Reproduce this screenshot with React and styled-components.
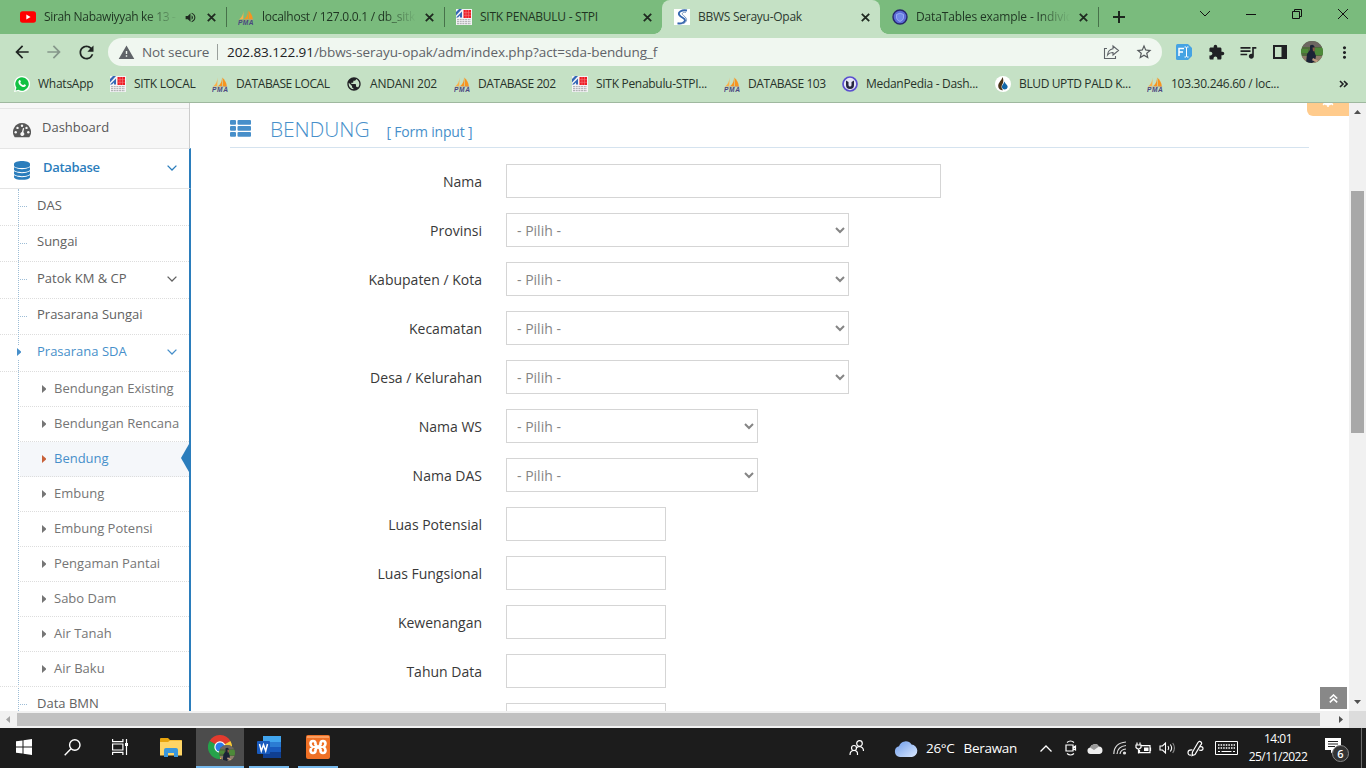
import React from 'react';
import styled, { createGlobalStyle, css } from 'styled-components';
import {
  MdArrowBack,
  MdArrowForward,
  MdExtension,
  MdMoreVert,
  MdPublic,
  MdQueueMusic,
  MdRefresh,
  MdStarBorder,
  MdVolumeUp,
  MdWarning,
} from 'react-icons/md';

const GlobalStyle = createGlobalStyle`
  * {
    box-sizing: border-box;
  }

  body {
    margin: 0;
    overflow: hidden;
    font-family: 'Open Sans', 'Noto Sans', sans-serif;
  }

  svg {
    display: block;
    flex: none;
  }
`;

/// FAVICONS

const YoutubeIcon = () => (
  <svg width="16" height="16" viewBox="0 0 16 16">
    <rect x="0" y="2.3" width="16" height="11.4" rx="2.6" fill="#f00" />
    <path d="M6.3 5.5 10.6 8 6.3 10.5z" fill="#fff" />
  </svg>
);

const PmaIcon = () => (
  <svg width="16" height="16" viewBox="0 0 16 16">
    <path d="M5.6 1.5C5.4 5 4 8.6 1 10.6L5.3 10z" fill="#f9b04a" />
    <path d="M9.8.5C10.4 4 9.2 8 6 10.3L10.4 10z" fill="#f79420" />
    <path d="M10.3 1.5C12.6 3.5 14.7 7 14.8 10.3L11 10z" fill="#f79420" />
    <path d="M.5 11 15.5 10 14.5 11 1.500 11.500z" fill="#c49a70" />
    <text x="0" y="16" fontFamily="Liberation Sans" fontSize="6.6" fontWeight="700" fontStyle="italic" textLength="15.5" fill="#4a4680">PMA</text>
  </svg>
);

const SitkIcon = () => (
  <svg width="16" height="16" viewBox="0 0 16 16">
    <rect width="16" height="16" fill="#f3f3f5" />
    <path d="M0 3 3 0H6L0 6.500zM0 8.500 6 2.500V8.500H4V6.500L2 8.500z" fill="#3467b5" />
    <rect x="7.5" y="1" width="7.5" height="8" fill="#ee1c25" />
    <path d="M10 1v8M12.5 1v8M7.5 3.7h7.500M7.5 6.300h7.500" stroke="#f47a7f" strokeWidth=".6" />
    <path d="M1 10.700h14M1 12.700h14M1 14.700h14" stroke="#a5a5a8" strokeWidth="1" strokeDasharray="2 .7" />
  </svg>
);

const SerayuIcon = () => (
  <svg width="16" height="16" viewBox="0 0 16 16">
    <rect width="16" height="16" fill="#fff" />
    <path d="M13 1.500C8 .5 3.500 3 5.300 6S11.500 9 11 11.500 7 15 3.500 14.200" fill="none" stroke="#3567b0" strokeWidth="1.900" />
    <path d="M12 3.300C7.800 3 7.500 5 9.500 6.500S13.300 10 12.300 12 9.500 14.300 8 14.700" fill="none" stroke="#6d8db8" strokeWidth=".9" />
  </svg>
);

const DataTablesIcon = () => (
  <svg width="16" height="16" viewBox="0 0 16 16">
    <circle cx="8" cy="8" r="7" fill="#5b6bd6" stroke="#26266b" strokeWidth="1.4" />
    <path d="M4.500 5.500Q8 2.800 11.500 5.500V9Q11 11.500 8 12.500 5 11.500 4.500 9z" fill="#7389e8" stroke="#a3b2f5" strokeWidth=".8" />
  </svg>
);

const MedanIcon = () => (
  <svg width="16" height="16" viewBox="0 0 16 16">
    <circle cx="8" cy="8" r="7" fill="#e6e6f5" stroke="#5a4fcf" strokeWidth="1.7" />
    <path d="M4 4.500V9a4 4 0 0 0 8 0V4.500L9.500 6v3a1.500 1.500 0 0 1-3 0V6z" fill="#26263f" />
  </svg>
);

const DropIcon = () => (
  <svg width="16" height="16" viewBox="0 0 16 16">
    <circle cx="8" cy="8" r="8" fill="#fff" />
    <path d="M7.500 1C7 4 3.200 6.500 3.200 10A4.300 4.300 0 0 0 8 14.300C6 12 6 10 8 7 8.500 5 8.500 3 7.500 1z" fill="#4a3418" />
    <path d="M9.300 5.500C8.800 8 6.700 9 6.900 11.400A3 3 0 0 0 12.700 11C12.800 9 10.500 8 9.300 5.500z" fill="#1266a8" />
  </svg>
);

const WhatsappIcon = () => (
  <svg width="16" height="16" viewBox="0 0 16 16">
    <path d="M8 0a8 8 0 1 1-3.800 15L0 16l1.100-4A8 8 0 0 1 8 0z" fill="#fff" />
    <path d="M8 1.200A6.800 6.800 0 1 1 4.400 13.800L1.600 14.400l.8-2.700A6.800 6.800 0 0 1 8 1.200z" fill="#12c143" />
    <path d="M5.200 4.200c.6-.5 1-.3 1.200.2l.5 1.100c0 .5-.6.8-.6 1.200.7 1.300 1.600 2 2.900 2.500.5-.1.700-.9 1.200-.9l1.500.8c.2.900-.8 2-1.900 2C7.300 11 4.500 8.200 4.400 5.900c0-.7.300-1.300.8-1.700z" fill="#fff" />
  </svg>
);

const Avatar = ({ size = 22 }) => (
  <svg width={size} height={size} viewBox="0 0 22 22">
    <clipPath id="face"><circle cx="11" cy="11" r="11" /></clipPath>
    <g clipPath="url(#face)">
      <rect width="22" height="22" fill="#4f6b3c" />
      <path d="M0 0h22v6H0z" fill="#6d6661" />
      <path d="M14 7h8v7h-8zM0 8h7v4H0z" fill="#4d8a39" />
      <path d="M0 15h22v7H0z" fill="#8f7c6a" />
      <path d="M9 4.500Q12 2.500 13.500 5.500L13 10l2 5-1 5-3 2H5l1-9 3-4z" fill="#1b2336" />
      <path d="M11.500 6.500h2.200l.2 3-1.900 1z" fill="#8a5c45" />
      <path d="M12 17l5 2.500-1 1.800-5-2z" fill="#c09a80" />
    </g>
  </svg>
);

/// BROWSER DATA

const tabs = [
  { title: 'Sirah Nabawiyyah ke 13 -', icon: <YoutubeIcon />, audio: true, titleWidth: 134, spacing: -0.34, fade: true },
  { title: 'localhost / 127.0.0.1 / db_sitk', icon: <PmaIcon />, titleWidth: 154, spacing: -0.27, fade: true },
  { title: 'SITK PENABULU - STPI', icon: <SitkIcon />, titleWidth: 154, spacing: -0.25 },
  { title: 'BBWS Serayu-Opak', icon: <SerayuIcon />, titleWidth: 154, active: true, spacing: -0.26 },
  { title: 'DataTables example - Individ', icon: <DataTablesIcon />, titleWidth: 154, spacing: -0.14, fade: true },
];

const bookmarks = [
  { label: 'WhatsApp', icon: <WhatsappIcon />, width: 96, spacing: -0.25 },
  { label: 'SITK LOCAL', icon: <SitkIcon />, width: 102, spacing: -0.25 },
  { label: 'DATABASE LOCAL', icon: <PmaIcon />, width: 134, spacing: -0.4 },
  { label: 'ANDANI 202', icon: <MdPublic size={16} color="#202124" />, width: 108, spacing: -0.2 },
  { label: 'DATABASE 202', icon: <PmaIcon />, width: 118, spacing: -0.42 },
  { label: 'SITK Penabulu-STPI...', icon: <SitkIcon />, width: 152, spacing: -0.3 },
  { label: 'DATABASE 103', icon: <PmaIcon />, width: 118, spacing: -0.42 },
  { label: 'MedanPedia - Dash...', icon: <MedanIcon />, width: 153, spacing: -0.3 },
  { label: 'BLUD UPTD PALD K...', icon: <DropIcon />, width: 152, spacing: -0.37 },
  { label: '103.30.246.60 / loc...', icon: <PmaIcon />, width: 140, spacing: -0.28 },
];

const Cross = () => (
  <svg width="9" height="9" viewBox="0 0 9 9">
    <path d="M.8.8 8.2 8.2M8.2.8.8 8.2" stroke="#1f2a20" strokeWidth="1.8" />
  </svg>
);

const Browser = () => (
  <>
    <TabStrip>
      {tabs.map((tab) => (
        <Tab key={tab.title} $active={tab.active}>
          {tab.icon}
          <TabTitle $width={tab.titleWidth} $spacing={tab.spacing} $active={tab.active} $fade={tab.fade}>{tab.title}</TabTitle>
          {tab.audio && <AudioIcon size={13} />}
          <TabClose><Cross /></TabClose>
        </Tab>
      ))}
      <NewTab>
        <svg width="12" height="12" viewBox="0 0 12 12"><path d="M6 0v12M0 6h12" stroke="#1d271e" strokeWidth="2" /></svg>
      </NewTab>
      <WindowButtons>
        <svg width="12" height="12" viewBox="0 0 12 12"><path d="M1 3l5 5 5-5" fill="none" stroke="#111" /></svg>
        <svg width="12" height="12" viewBox="0 0 12 12"><path d="M1 6.500h10" stroke="#111" /></svg>
        <svg width="12" height="12" viewBox="0 0 12 12"><path d="M1.500 3.500h7v7h-7zM3.500 3.500v-2h7v7h-2" fill="none" stroke="#111" /></svg>
        <svg width="12" height="12" viewBox="0 0 12 12"><path d="M1 1l10 10M11 1L1 11" stroke="#111" /></svg>
      </WindowButtons>
    </TabStrip>
    <Toolbar>
      <NavButtons>
        <MdArrowBack size={20} color="#1f2522" />
        <MdArrowForward size={20} color="#85968a" />
        <MdRefresh size={21} color="#1f2522" />
      </NavButtons>
      <AddressBar>
        <MdWarning size={17} color="#5f6368" />
        <NotSecure>Not secure</NotSecure>
        <Url><b>202.83.122.91</b>/bbws-serayu-opak/adm/index.php?act=sda-bendung_f</Url>
        <svg width="17" height="16" viewBox="0 0 17 16" fill="none" stroke="#5f6368" strokeWidth="1.1">
          <path d="M4 4.500H1.500V14.500H12.500V12" />
          <path d="M10 2l5.500 4.500L10 11V8.500Q6.500 8.300 4.500 11 5 5.500 10 4.700z" />
        </svg>
        <MdStarBorder size={18} color="#55595c" />
      </AddressBar>
      <Extensions>
        <svg width="16" height="16" viewBox="0 0 16 16">
          <path d="M1.500 0H12L16 4v8l-4 4H1.500Q0 16 0 14.500V1.500Q0 0 1.500 0z" fill="#45a3e3" />
          <path d="M3 12V4.500H8M3 8h4" fill="none" stroke="#fff" strokeWidth="1.5" />
          <path d="M8.500 3h1.500l.5.500.5-.5h1.500M10.500 3.500v9M8.500 13h1.500l.5-.5.5.5h1.500" fill="none" stroke="#fff" strokeWidth="1" />
        </svg>
        <MdExtension size={17} />
        <MdQueueMusic size={20} />
        <svg width="14" height="14" viewBox="0 0 14 14">
          <path d="M1 1h12v12H1z" fill="none" stroke="#202124" strokeWidth="2" />
          <path d="M8.500 0H14v14H8.500z" fill="#202124" />
        </svg>
        <Avatar />
        <MdMoreVert size={19} />
      </Extensions>
    </Toolbar>
    <BookmarksBar>
      {bookmarks.map((b) => (
        <Bookmark key={b.label} $width={b.width} $spacing={b.spacing}>
          {b.icon}
          {b.label}
        </Bookmark>
      ))}
      <svg width="9" height="8" viewBox="0 0 9 8"><path d="M1 1l3 3-3 3M5 1l3 3-3 3" fill="none" stroke="#202124" strokeWidth="1.6" /></svg>
    </BookmarksBar>
  </>
);

/// SIDEBAR

const subItems = [
  'Bendungan Existing', 'Bendungan Rencana', 'Bendung', 'Embung', 'Embung Potensi',
  'Pengaman Pantai', 'Sabo Dam', 'Air Tanah', 'Air Baku',
];

const items = [
  { label: 'DAS', height: 37 },
  { label: 'Sungai', height: 36 },
  { label: 'Patok KM & CP', height: 37, arrow: true },
  { label: 'Prasarana Sungai', height: 36 },
  { label: 'Prasarana SDA', height: 37, arrow: true, open: true, children: subItems },
  { label: 'Data BMN', height: 37 },
];

const Chevron = () => (
  <svg width="10" height="6" viewBox="0 0 10 6">
    <path d="M.6.6 5 5 9.4.6" fill="none" stroke="currentColor" strokeWidth="1.3" />
  </svg>
);

const Caret = () => (
  <svg width="4" height="8" viewBox="0 0 4 8"><path d="M0 0 4 3.500V4.500L0 8z" fill="currentColor" /></svg>
);

const Sidebar = () => (
  <SidebarBox>
    <TopItem>
      <svg width="18" height="15" viewBox="0 0 18 15">
        <path d="M9 0A9 9 0 0 0 1.400 13.800Q1.700 14.300 2.200 14.300H15.800Q16.300 14.300 16.600 13.800A9 9 0 0 0 9 0z" fill="#585858" />
        <g fill="#f7f7f7">
          <circle cx="2.700" cy="9.300" r="1.2" />
          <circle cx="4.500" cy="4.900" r="1.2" />
          <circle cx="9" cy="2.700" r="1.2" />
          <circle cx="13.500" cy="4.900" r="1.2" />
          <circle cx="15.300" cy="9.300" r="1.2" />
          <path d="M10 4.900 11.200 5.200 10.300 9.200A2 2 0 1 1 8.900 9z" />
        </g>
      </svg>
      <span>Dashboard</span>
    </TopItem>
    <TopItem $open>
      <svg width="16" height="19" viewBox="0 0 16 19" fill="#2b7dbc">
        <path d="M0 3C0-1 16-1 16 3V4.400C16 8 0 8 0 4.400z" />
        <path d="M0 6.300Q8 10 16 6.300V8.500C16 12 0 12 0 8.500z" />
        <path d="M0 10.300Q8 14 16 10.300V12.500C16 16 0 16 0 12.500z" />
        <path d="M0 14.300Q8 18 16 14.300V16C16 19.800 0 19.800 0 16z" />
      </svg>
      <span>Database</span>
      <Chevron />
    </TopItem>
    <Submenu>
      {items.map((item) => (
        <React.Fragment key={item.label}>
          <Item $height={item.height} $open={item.open}>
            {item.open ? <OpenMark><Caret /></OpenMark> : <Branch />}
            <span>{item.label}</span>
            {item.arrow && <Chevron />}
          </Item>
          {item.children && (
            <SubList>
              {item.children.map((child) => (
                <SubItem key={child} $active={child === 'Bendung'}>
                  <Caret />
                  <span>{child}</span>
                </SubItem>
              ))}
            </SubList>
          )}
        </React.Fragment>
      ))}
    </Submenu>
  </SidebarBox>
);

/// FORM

const fields = [
  { label: 'Nama', width: 435 },
  { label: 'Provinsi', width: 343, select: true },
  { label: 'Kabupaten / Kota', width: 343, select: true },
  { label: 'Kecamatan', width: 343, select: true },
  { label: 'Desa / Kelurahan', width: 343, select: true },
  { label: 'Nama WS', width: 252, select: true },
  { label: 'Nama DAS', width: 252, select: true },
  { label: 'Luas Potensial', width: 160 },
  { label: 'Luas Fungsional', width: 160 },
  { label: 'Kewenangan', width: 160 },
  { label: 'Tahun Data', width: 160 },
  { label: '', width: 160 },
];

const Form = () => (
  <Main>
    <PageHeader>
      <svg width="22" height="17" viewBox="0 0 22 17" fill="#478fca">
        {[0, 6, 12].map((y) => (
          <g key={y}>
            <rect x="0" y={y} width="6" height="4.7" rx="1" />
            <rect x="7.5" y={y} width="13.5" height="4.7" rx="1" />
          </g>
        ))}
      </svg>
      <Title>BENDUNG</Title>
      <Small>[ Form input ]</Small>
    </PageHeader>
    {fields.map((f) => (
      <FormRow key={f.label}>
        <Label>{f.label}</Label>
        {f.select ? (
          <Select $width={f.width}><option>- Pilih -</option></Select>
        ) : (
          <Input $width={f.width} />
        )}
      </FormRow>
    ))}
    <Settings>
      <svg width="14" height="14" viewBox="0 0 14 14"><circle cx="7" cy="7" r="4" fill="none" stroke="#fff" strokeWidth="3" /><path d="M7 0v14M0 7h14M2 2l10 10M12 2 2 12" stroke="#fff" strokeWidth="1.5" strokeDasharray="2 10" /></svg>
    </Settings>
    <ScrollUp>
      <svg width="9" height="9" viewBox="0 0 9 9"><path d="M.8 4.500 4.500 1l3.700 3.500M.8 8.300 4.500 4.800l3.700 3.500" fill="none" stroke="#fff" strokeWidth="1.6" /></svg>
    </ScrollUp>
  </Main>
);

/// TASKBAR

const Taskbar = () => (
  <TaskbarBox>
    <TaskButton>
      <svg width="16" height="16" viewBox="0 0 16 16" fill="#fff"><path d="M0 2.300 6.500 1.400V7.500H0zM7.500 1.200 16 0V7.500H7.500zM0 8.500H6.500V14.600L0 13.700zM7.500 8.500H16V16L7.500 14.800z" /></svg>
    </TaskButton>
    <TaskButton>
      <svg width="17" height="17" viewBox="0 0 17 17" fill="none" stroke="#fff" strokeWidth="1.4"><circle cx="10.800" cy="6" r="5.2" /><path d="M7 9.800.7 16.200" /></svg>
    </TaskButton>
    <TaskButton>
      <svg width="17" height="16" viewBox="0 0 17 16" fill="none" stroke="#fff" strokeWidth="1.2">
        <path d="M.6 0v2.600h10.300V0M.6 16v-2.600h10.300V16M.6 5h10.300v6H.6zM14.500 0v16" />
        <path d="M13 4h3v3h-3z" fill="#fff" stroke="none" />
      </svg>
    </TaskButton>
    <TaskButton $wide>
      <svg width="22" height="19" viewBox="0 0 22 19">
        <path d="M0 1Q0 0 1 0H8L10 2H21Q22 2 22 3V17H0z" fill="#e8a50e" />
        <path d="M0 4H8L10 2.500H22V17.500H0z" fill="#ffd566" />
        <path d="M4 19V12Q4 10 6 10H16Q18 10 18 12V19H14V15H8V19z" fill="#3a97dc" />
      </svg>
    </TaskButton>
    <TaskButton $active>
      <ChromeLogo>
        <svg width="24" height="24" viewBox="0 0 24 24">
          <path d="M12 12 1.600 6A12 12 0 0 1 22.400 6z" fill="#e33b2e" />
          <path d="M12 12 22.400 6A12 12 0 0 1 12 24z" fill="#fcc934" />
          <path d="M12 12V24A12 12 0 0 1 1.600 6z" fill="#25a24a" />
          <circle cx="12" cy="12" r="5.7" fill="#fff" />
          <circle cx="12" cy="12" r="4.5" fill="#2e7bea" />
        </svg>
        <ProfileBadge><Avatar size={16} /></ProfileBadge>
      </ChromeLogo>
    </TaskButton>
    <TaskButton $running>
      <svg width="24" height="22" viewBox="0 0 24 22">
        <rect x="6" width="18" height="22" rx="1" fill="#2b7cd3" />
        <path d="M6 0H24V6H6z" fill="#41a5ee" />
        <path d="M6 11H24V16H6z" fill="#185abd" />
        <path d="M6 16H24V21Q24 22 23 22H6z" fill="#103f91" />
        <rect y="5" width="13" height="13" rx="1" fill="#185abd" />
        <path d="M2.500 8 4.300 15 6.500 8.800 8.700 15 10.500 8" fill="none" stroke="#fff" strokeWidth="1.5" />
      </svg>
    </TaskButton>
    <TaskButton $running>
      <svg width="24" height="24" viewBox="0 0 24 24">
        <rect width="24" height="24" rx="2" fill="#ef7025" />
        <path d="M1 1h22v2H1z" fill="#fa9d60" />
        <g fill="none" stroke="#fff" strokeWidth="2.6" strokeLinecap="round">
          <path d="M9.500 9.500V8.500Q9.500 6 7 6T4.500 8.800Q4.500 10.500 6.500 12 4.500 13.500 4.500 15.200 4.500 18 7 18T9.500 15.500V14.500" />
          <path d="M14.500 9.500V8.500Q14.500 6 17 6T19.500 8.800Q19.500 10.500 17.500 12 19.500 13.500 19.500 15.200 19.500 18 17 18T14.500 15.500V14.500" />
          <path d="M8 12h8M9.500 9.500l5 5M14.500 9.500l-5 5" strokeWidth="2.2" />
        </g>
      </svg>
    </TaskButton>

    <Tray>
      <TrayIcon $width={59}>
        <svg width="16" height="16" viewBox="0 0 16 16" fill="none" stroke="#fff" strokeWidth="1.2"><circle cx="10.500" cy="3.500" r="2.8" /><circle cx="5" cy="8" r="2.5" /><path d="M1 15Q1 10.500 5 10.500T8.500 15M8 7.500Q9 6.500 10.500 6.500 14.500 7 14.500 11" /></svg>
      </TrayIcon>
      <TrayIcon $width={40}>
        <svg width="24" height="17" viewBox="0 0 24 17">
          <defs><linearGradient id="sky" x2="1" y2="1"><stop stopColor="#6e9cea" /><stop offset="1" stopColor="#dbe9ff" /></linearGradient></defs>
          <path d="M6 17A5.500 5.500 0 0 1 5 6.200 7 7 0 0 1 17.500 4.500 6.300 6.300 0 0 1 18 17z" fill="url(#sky)" />
        </svg>
      </TrayIcon>
      <Weather><span>26°C</span><span>Berawan</span></Weather>
      <TrayIcon $width={26}>
        <svg width="12" height="7" viewBox="0 0 12 7"><path d="M.5 6.500 6 1l5.500 5.500" fill="none" stroke="#fff" strokeWidth="1.3" /></svg>
      </TrayIcon>
      <TrayIcon $width={24}>
        <svg width="12" height="16" viewBox="0 0 12 16" fill="none" stroke="#fff" strokeWidth="1.2"><path d="M1 5h7v6H1zM8 7.500l2.500-1.500v4L8 8.500M2 2.500Q5.500-.5 9 2.500M2 13.500Q5.500 16.500 9 13.500" /></svg>
      </TrayIcon>
      <TrayIcon $width={24}>
        <svg width="16" height="11" viewBox="0 0 16 11"><path d="M3.500 11A3.300 3.300 0 0 1 3 4.500 5 5 0 0 1 12 3.500 3.800 3.800 0 0 1 12.500 11z" fill="#eee" /><path d="M3 4.500A5 5 0 0 1 12 3.500L7 7z" fill="#999" /></svg>
      </TrayIcon>
      <TrayIcon $width={25}>
        <svg width="14" height="14" viewBox="0 0 14 14" fill="none" stroke="#ddd" strokeWidth="1.2"><path d="M.8 13Q1 2 13 1M4 13Q4.500 5.500 13 4.500M7 13Q7.500 8.500 13 8" /><circle cx="11.500" cy="12" r="1" fill="#fff" /></svg>
      </TrayIcon>
      <TrayIcon $width={23}>
        <svg width="17" height="13" viewBox="0 0 17 13" fill="none" stroke="#fff" strokeWidth="1.2"><path d="M6 3.600h9v7H4.500V8M15.500 5.500v3.500M1 3h5v2.500Q3.500 8.500 1 5.500zM2 3V.5M5 3V.5M3.500 7.500v4" /><path d="M9 5.500h4.500v3.500H9z" fill="#fff" stroke="none" /></svg>
      </TrayIcon>
      <TrayIcon $width={24}>
        <svg width="17" height="14" viewBox="0 0 17 14" fill="none" stroke="#fff" strokeWidth="1.1"><path d="M1 5h2.500L6.500 2v10L3.500 9H1zM9 5q1.500 2 0 4M11.300 3.500q2.700 3.500 0 7" /><path d="M13.700 2q3.500 5 0 10" stroke="#888" /></svg>
      </TrayIcon>
      <TrayIcon $width={32}>
        <svg width="17" height="17" viewBox="0 0 17 17" fill="none" stroke="#fff" strokeWidth="1.2"><path d="M5.500 12 11 2.500Q12.500.5 14 2t-.3 3L8 14.500 5 15.500zM5.500 10Q1 9.500 1 12.500T4 15M12 7q4-1 4 1.500t-4 1.500" /></svg>
      </TrayIcon>
      <TrayIcon $width={30}>
        <svg width="23" height="14" viewBox="0 0 23 14" fill="none" stroke="#fff"><path d="M.5.5h22v13H.5z" /><path d="M3 4h17M3 7h17" strokeWidth="1.3" strokeDasharray="1.500 1.100" /><path d="M3 10.500h2M6.500 10.500h10M18 10.500h2" /></svg>
      </TrayIcon>
      <Clock><span>14:01</span><span>25/11/2022</span></Clock>
      <Notifications>
        <svg width="16" height="16" viewBox="0 0 16 16"><path d="M0 0h16v12H9L6 15.500V12H0z" fill="#fff" /><path d="M3 3.500h10M3 6h10M3 8.500h7" stroke="#222" /></svg>
        <Count>6</Count>
      </Notifications>
      <ShowDesktop />
    </Tray>
  </TaskbarBox>
);

const App = () => (
  <Screen>
    <GlobalStyle />
    <Browser />
    <Viewport>
      <Sidebar />
      <Form />
      <VScroll>
        <svg width="7" height="4" viewBox="0 0 7 4"><path d="M0 4 3.500 0 7 4z" fill="#505050" /></svg>
        <VThumb />
        <svg width="7" height="4" viewBox="0 0 7 4"><path d="M0 0h7L3.500 4z" fill="#505050" /></svg>
      </VScroll>
    </Viewport>
    <HScroll>
      <svg width="4" height="7" viewBox="0 0 4 7"><path d="M4 0 0 3.500 4 7z" fill="#a3a3a3" /></svg>
      <HThumb />
      <svg width="4" height="7" viewBox="0 0 4 7"><path d="M0 0 4 3.500 0 7z" fill="#505050" /></svg>
      <Corner />
    </HScroll>
    <Taskbar />
  </Screen>
);

export default App;

const Screen = styled.div`
  display: flex;
  flex-direction: column;
  width: 1366px;
  height: 768px;
  overflow: hidden;
  background: #fff;
`;

const TabStrip = styled.div`
  display: flex;
  height: 34px;
  padding-left: 8px;
  background: #7abb7d;
`;

const Tab = styled.div`
  display: flex;
  align-items: center;
  width: 218px;
  height: 34px;
  padding-left: 12px;
  position: relative;
  background: ${(p) => (p.$active ? '#c5e1c5' : 'transparent')};
  border-radius: 8px 8px 0 0;

  &:not(:nth-child(3))::after {
    content: '';
    position: absolute;
    right: -1px;
    top: 7px;
    width: 1px;
    height: 20px;
    background: #47714a;
  }

  ${(p) => p.$active && css`
    && {
      &::before, &::after {
        content: '';
        position: absolute;
        top: auto;
        bottom: 0;
        width: 8px;
        height: 8px;
        background: radial-gradient(circle at 0 0, transparent 7.5px, #c5e1c5 8px);
      }

      &::before {
        left: -8px;
      }

      &::after {
        right: -8px;
        background: radial-gradient(circle at 100% 0, transparent 7.5px, #c5e1c5 8px);
      }
    }
  `}
`;

const TabTitle = styled.span`
  width: ${(p) => p.$width}px;
  margin-left: 8px;
  white-space: nowrap;
  font-size: 12px;
  line-height: 18px;
  letter-spacing: ${(p) => p.$spacing}px;
  color: ${(p) => (p.$active ? '#2d3a30' : '#1f3522')};
  ${(p) => p.$fade && 'mask-image: linear-gradient(90deg, #000 calc(100% - 32px), transparent);'}
`;

const AudioIcon = styled(MdVolumeUp)`
  margin-left: 6px;
  color: #1f2a20;
`;

const TabClose = styled.span`
  margin-left: auto;
  margin-right: 10px;
`;

const NewTab = styled.div`
  display: flex;
  align-items: center;
  margin-left: 15px;
`;

const WindowButtons = styled.div`
  display: flex;
  gap: 34px;
  margin-left: auto;
  padding: 8px 17px 0 0;
`;

const Toolbar = styled.div`
  display: flex;
  align-items: center;
  height: 36px;
  background: #c5e1c5;
`;

const NavButtons = styled.div`
  display: flex;
  align-items: center;
  gap: 12px;
  width: 108px;
  padding-left: 12px;
`;

const AddressBar = styled.div`
  display: flex;
  align-items: center;
  width: 1054px;
  height: 28px;
  padding: 0 9px 0 10px;
  border-radius: 14px;
  background: #f0f7f0;
  font-size: 14px;

  & > :last-child {
    margin-left: 15px;
  }
`;

const NotSecure = styled.span`
  width: 76px;
  height: 16px;
  margin-left: 7px;
  line-height: 17px;
  font-size: 13.5px;
  letter-spacing: -0.12px;
  white-space: nowrap;
  color: #5f6368;
  border-right: 1px solid #9aa09c;
`;

const Url = styled.span`
  flex: 1;
  margin-left: 9px;
  font-size: 13.5px;
  line-height: 18px;
  letter-spacing: -0.07px;
  color: #5f6368;

  b {
    font-weight: 400;
    color: #202124;
  }
`;

const Extensions = styled.div`
  display: grid;
  grid-template-columns: repeat(6, 32px);
  align-items: center;
  justify-items: center;
  padding-left: 6px;
  color: #202124;
`;

const BookmarksBar = styled.div`
  display: flex;
  align-items: center;
  height: 33px;
  padding: 0 18px 5px 14px;
  background: #c5e1c5;
  border-bottom: 1px solid #9fb89f;

  & > svg:last-child {
    margin-left: auto;
  }
`;

const Bookmark = styled.div`
  display: flex;
  align-items: center;
  gap: 8px;
  width: ${(p) => p.$width}px;
  letter-spacing: ${(p) => p.$spacing}px;
  font-size: 12px;
  white-space: nowrap;
  color: #27332a;
`;

const Viewport = styled.div`
  display: flex;
  height: 608px;
  overflow: hidden;
`;

const SidebarBox = styled.nav`
  width: 191px;
  padding-top: 5px;
  font-size: 13px;
  color: #585858;
  background: linear-gradient(90deg, #f7f7f7 189px, #ccc 189px, #ccc 190px, #fff 190px);
`;

const TopItem = styled.div`
  display: flex;
  align-items: center;
  height: 40px;
  margin-right: 2px;
  padding: 0 12px 4px 13px;
  border-top: 1px solid #e5e5e5;
  line-height: 18px;

  & > svg:first-child {
    margin-top: 8px;
  }

  & > span {
    margin-left: 11px;
  }

  ${(p) => p.$open && css`
    height: 41px;
    margin-right: 0;
    padding-right: 12px;
    padding-left: 14px;
    color: #2b7dbc;
    font-weight: 600;
    background: #fff;
    border-bottom: 1px solid #e5e5e5;
    border-right: 2px solid #2b7dbc;

    & > span {
      margin-left: 13px;
      letter-spacing: -0.3px;
    }

    & > svg:last-child {
      margin-left: auto;
      margin-top: 2px;
    }
  `}
`;

const Submenu = styled.div`
  position: relative;
  height: 540px;
  overflow: hidden;
  background: #fff;
  border-right: 2px solid #2b7dbc;

  &::before {
    content: '';
    position: absolute;
    left: 18px;
    top: 0;
    bottom: 0;
    border-left: 1px dotted #9dbdd6;
  }
`;

const Item = styled.div`
  display: flex;
  align-items: center;
  height: ${(p) => p.$height}px;
  padding: 0 12px 5px 0;
  color: ${(p) => (p.$open ? '#478fca' : '#616161')};
  border-bottom: 1px dotted #ddd;

  & > svg:last-child {
    margin-left: auto;
    margin-top: 3px;
  }
`;

const Branch = styled.i`
  width: 7px;
  margin: 4px 10px 0 20px;
  border-top: 1px dotted #9dbdd6;
`;

const OpenMark = styled.i`
  width: 4px;
  margin: 2px 16px 0 17px;
  padding: 3px 0;
  background: #fff;
  z-index: 1;
`;

const SubList = styled.div`
  margin-left: 20px;
`;

const SubItem = styled.div`
  display: flex;
  align-items: center;
  gap: 8px;
  height: 35px;
  padding: 0 0 3px 22px;
  position: relative;
  white-space: nowrap;
  border-bottom: 1px dotted #ddd;
  color: #757575;

  & > svg {
    margin-top: 2px;
  }

  ${(p) => p.$active && css`
    background: #f5f7fa;
    color: #478fca;

    & > svg {
      color: #c86139;
    }

    &::after {
      content: '';
      position: absolute;
      right: 0;
      top: 2px;
      border: solid transparent;
      border-width: 14px 8px 14px 0;
      border-right-color: #2b7dbc;
    }
  `}

  &:last-child {
    margin-left: -20px;
    padding-left: 42px;
  }
`;

const Main = styled.main`
  position: relative;
  flex: 1;
  padding: 0 40px 0 39px;
`;

const PageHeader = styled.header`
  display: flex;
  align-items: center;
  height: 45px;
  margin-bottom: 16px;
  border-bottom: 1px solid #d5e3ef;
  color: #478fca;

  & > svg {
    margin-top: 6px;
  }
`;

const Title = styled.h1`
  margin: 7px 0 0 18px;
  font-size: 21px;
  font-weight: 300;
  line-height: 28px;
  letter-spacing: -0.1px;
`;

const Small = styled.small`
  margin: 14px 0 0 17px;
  font-size: 14px;
  line-height: 18px;
  letter-spacing: -0.2px;
`;

const FormRow = styled.div`
  display: flex;
  align-items: center;
  height: 34px;
  margin-bottom: 15px;
`;

const Label = styled.label`
  width: 252px;
  margin-right: 24px;
  padding-top: 2px;
  text-align: right;
  font-size: 14px;
  line-height: 20px;
  color: #393939;
`;

const control = css`
  width: ${(p) => p.$width}px;
  height: 34px;
  margin: 0;
  font-family: inherit;
  font-size: 14px;
  color: #858585;
  background: #fff;
  border: 1px solid #d5d5d5;
  border-radius: 0;
`;

const Input = styled.input`
  ${control}
  padding: 5px 4px;
`;

const Select = styled.select`
  ${control}
  padding: 3px 6px;
`;

const Settings = styled.div`
  position: absolute;
  right: 0;
  top: 0;
  width: 42px;
  height: 13px;
  overflow: hidden;
  display: flex;
  align-items: flex-end;
  justify-content: center;
  padding-bottom: 9px;
  background: #ffcb8c;
  border-radius: 0 0 0 6px;
`;

const ScrollUp = styled.div`
  position: absolute;
  right: 2px;
  bottom: 2px;
  display: flex;
  align-items: center;
  justify-content: center;
  width: 27px;
  height: 22px;
  background: #888;
`;

const VScroll = styled.div`
  display: flex;
  flex-direction: column;
  align-items: center;
  width: 17px;
  padding: 7px 0;
  background: #f1f1f1;

  & > svg:last-child {
    margin-top: auto;
  }
`;

const VThumb = styled.div`
  width: 13px;
  height: 242px;
  margin-top: 77px;
  background: #a8a8a8;
`;

const HScroll = styled.div`
  display: flex;
  align-items: center;
  height: 17px;
  padding-left: 6px;
  background: #f1f1f1;
`;

const HThumb = styled.div`
  width: 1303px;
  height: 13px;
  margin: 0 19px 0 7px;
  background: #c1c1c1;
`;

const Corner = styled.div`
  width: 17px;
  height: 17px;
  margin-left: auto;
  background: #dcdcdc;
`;

const TaskbarBox = styled.div`
  display: flex;
  height: 40px;
  background: #1c1c1c;
  color: #fff;
`;

const TaskButton = styled.div`
  display: flex;
  align-items: center;
  justify-content: center;
  width: ${(p) => (p.$wide ? 54 : p.$running ? 40 : 48)}px;
  margin-right: ${(p) => (p.$running ? 9 : 0)}px;
  ${(p) => p.$wide && 'margin-right: -2px;'}
  ${(p) => p.$active && 'background: #4c4c4c; margin-right: 5px;'}
  border-bottom: 2px solid ${(p) => (p.$active || p.$running ? '#76b9ed' : 'transparent')};
`;

const ChromeLogo = styled.div`
  position: relative;
`;

const ProfileBadge = styled.div`
  position: absolute;
  right: -3px;
  bottom: -2px;
`;

const Tray = styled.div`
  display: flex;
  align-items: center;
  margin-left: auto;
`;

const TrayIcon = styled.div`
  display: flex;
  align-items: center;
  justify-content: center;
  width: ${(p) => p.$width}px;
`;

const Weather = styled.div`
  display: flex;
  gap: 9px;
  width: 107px;
  font-size: 13.5px;
  letter-spacing: -0.3px;
  white-space: nowrap;
`;

const Clock = styled.div`
  display: flex;
  flex-direction: column;
  align-items: center;
  width: 74px;
  font-size: 12px;
  line-height: 18px;
  letter-spacing: -0.5px;
`;

const Notifications = styled.div`
  position: relative;
  width: 46px;
  height: 20px;
  padding-left: 10px;
`;

const Count = styled.span`
  position: absolute;
  left: 17px;
  top: 7px;
  width: 17px;
  height: 17px;
  border: 1px solid #888;
  border-radius: 50%;
  background: #333;
  font-size: 11px;
  font-weight: 600;
  line-height: 15px;
  text-align: center;
`;

const ShowDesktop = styled.div`
  width: 5px;
  height: 40px;
  border-left: 1px solid #6b6b6b;
`;
